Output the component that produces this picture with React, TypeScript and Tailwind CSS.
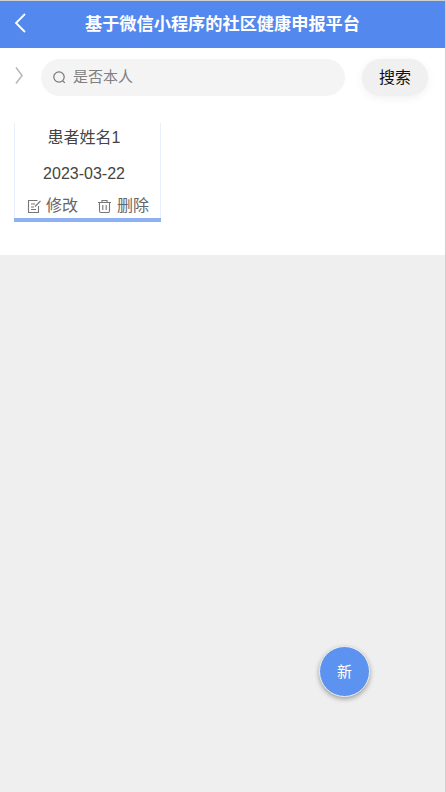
import React from "react";

export default function App() {
  return (
    <div className="h-[792px] w-[446px] overflow-hidden bg-[#cfcfcf] font-['Liberation_Sans','Noto_Sans_CJK_SC',sans-serif]">
      <div className="mt-px flex h-[791px] w-[445px] flex-col bg-[#efefef]">
        <header className="relative flex h-[47px] shrink-0 items-center justify-center bg-[#5388ee] text-white">
          <svg className="absolute left-[13px] top-[11px]" width="14" height="22" viewBox="0 0 14 22" fill="none" stroke="currentColor" strokeWidth="1.8">
            <path d="M12 2 3 11l9 9" />
          </svg>
          <h1 className="text-[17.2px] font-bold">基于微信小程序的社区健康申报平台</h1>
        </header>
        <section className="h-[207px] shrink-0 bg-white">
          <div className="flex h-[75px] items-start pl-[14px] pt-[11px]">
            <svg className="mt-[7px]" width="10" height="19" viewBox="0 0 10 19" fill="none" stroke="#b9b9b9" strokeWidth="1.6">
              <path d="M2 1.5 8 9.5l-6 8" />
            </svg>
            <div className="ml-[17px] flex h-[37px] w-[304px] items-center rounded-full bg-[#f4f4f4] pl-[11px] text-[15px] text-[#808080]">
              <svg width="15" height="15" viewBox="0 0 15 15" fill="none" stroke="#777" strokeWidth="1.2">
                <circle cx="7" cy="7" r="5.2" />
                <path d="m10.8 10.8 2 2" />
              </svg>
              <span className="ml-[6px]">是否本人</span>
            </div>
            <button className="ml-[17px] h-[37px] w-[66px] rounded-full bg-[#f0f0f0] text-[16px] text-[#111] shadow-[0_2px_8px_rgba(0,0,0,0.06)]">搜索</button>
          </div>
          <div className="ml-[14px] h-[99px] w-[147px] border-b-4 border-b-[#8eb0f4]">
            <div className="flex h-full flex-col border-x border-x-[#e8eefc] text-[#444]">
              <div className="mt-[3px] pr-[7px] text-center text-[16px] leading-[24px]">患者姓名1</div>
              <div className="mt-[12px] pr-[7px] text-center text-[16px] leading-[24px]">2023-03-22</div>
              <div className="mt-[9px] flex items-center pl-[12px] text-[16px] leading-[22px] text-[#666]">
                <svg width="15" height="15" viewBox="0 0 15 15" fill="none" stroke="#777" strokeWidth="1.1">
                  <path d="M10.5 1.5H1.5v12h10V7M4 5h4M4 8h3M4 10.5h5M13.5 2 8 7.5" />
                </svg>
                <span className="ml-[4px]">修改</span>
                <svg className="ml-[19px]" width="15" height="15" viewBox="0 0 15 15" fill="none" stroke="#777" strokeWidth="1.1">
                  <path d="M1 3.5h13M5 3.5V1.5h5v2M2.5 3.5v8.5a1.5 1.5 0 0 0 1.5 1.5h7a1.5 1.5 0 0 0 1.5-1.5V3.5M5.8 6v5M9.2 6v5" />
                </svg>
                <span className="ml-[5px]">删除</span>
              </div>
            </div>
          </div>
        </section>
        <div className="relative flex-1">
          <button className="absolute left-[319px] top-[391px] h-[51px] w-[51px] rounded-full border-[1.5px] border-[#f0f0f0] bg-[#5d93f0] pt-px text-[15px] text-white shadow-[0_2px_5px_rgba(0,0,0,0.35)]">新</button>
        </div>
      </div>
    </div>
  );
}
